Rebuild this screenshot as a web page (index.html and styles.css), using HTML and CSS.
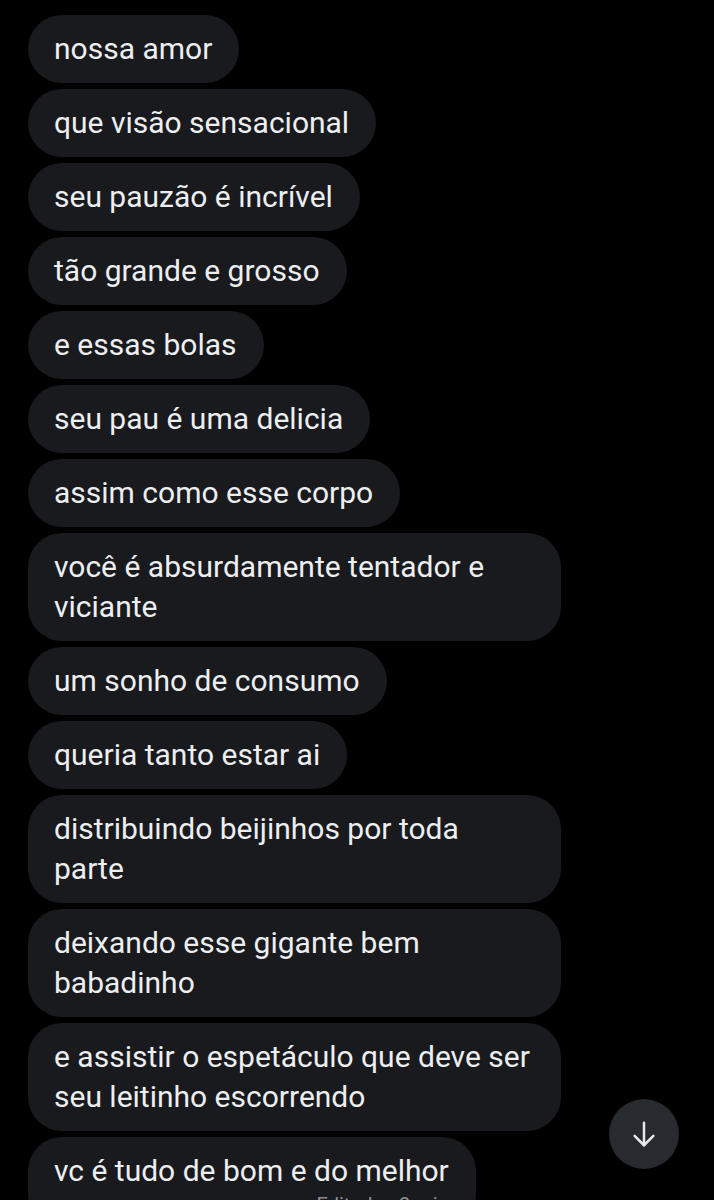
FILE: index.html
```html
<!DOCTYPE html>
<html lang="pt">
<head>
    <meta charset="UTF-8">
    <meta name="viewport" content="width=device-width, initial-scale=1.0">
    <title>Mensagens</title>
    <link rel="stylesheet" href="styles.css">
</head>
<body>

<div class="chat">
    <div class="msg">nossa amor</div>
    <div class="msg">que visão sensacional</div>
    <div class="msg">seu pauzão é incrível</div>
    <div class="msg">tão grande e grosso</div>
    <div class="msg">e essas bolas</div>
    <div class="msg">seu pau é uma delicia</div>
    <div class="msg">assim como esse corpo</div>
    <div class="msg">você é absurdamente tentador e viciante</div>
    <div class="msg">um sonho de consumo</div>
    <div class="msg">queria tanto estar ai</div>
    <div class="msg">distribuindo beijinhos por toda parte</div>
    <div class="msg">deixando esse gigante bem babadinho</div>
    <div class="msg">e assistir o espetáculo que deve ser seu leitinho escorrendo</div>
    <div class="msg last">
        vc é tudo de bom e do melhor
        <div class="meta">Editado · 2 min</div>
    </div>
</div>

<!-- scroll to bottom button -->
<div class="scroll-down">
    <svg width="30" height="30" viewBox="0 0 24 24" fill="none" stroke="#e7e9ea" stroke-width="2" stroke-linecap="round" stroke-linejoin="round">
        <path d="M12 3v18"/>
        <path d="M4.5 13.5 12 21l7.5-7.5"/>
    </svg>
</div>

</body>
</html>
```

FILE: styles.css
```css
html, body {
    margin: 0;
    background-color: #000;
}

body {
    font-family: Roboto, "Noto Sans", sans-serif;
    color: #eceef0;
    height: 1200px;
    overflow: hidden;
    position: relative;
}

.chat {
    display: flex;
    flex-direction: column;
    align-items: flex-start;
    gap: 6px;
    padding: 15px 0 0 28px;
}

.msg {
    background-color: #191a1d;
    border-radius: 34px;
    padding: 14px 27px 14px 26px;
    font-size: 30px;
    line-height: 40px;
    max-width: 480px;
}

.msg.last {
    padding-bottom: 10px;
}

.meta {
    text-align: right;
    font-size: 20px;
    line-height: 24px;
    color: #8b8f94;
    padding-top: 2px;
}

.scroll-down {
    position: absolute;
    left: 609px;
    top: 1099px;
    width: 70px;
    height: 70px;
    border-radius: 50%;
    background-color: #272a2e;
    display: flex;
    align-items: center;
    justify-content: center;
}
```
